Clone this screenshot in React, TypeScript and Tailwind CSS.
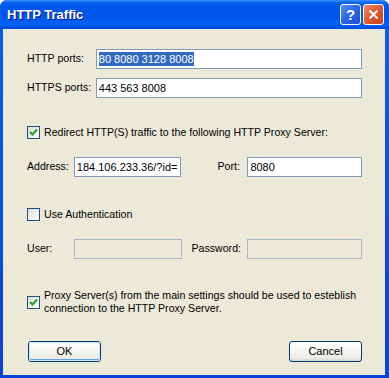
import React from "react";

const font = { fontFamily: '"Liberation Sans", Arial, sans-serif' };

function Check({ checked }: { checked: boolean }) {
  return (
    <div className="w-[13px] h-[13px] border border-[#1C5180] bg-[linear-gradient(135deg,#DCDCD7_0%,#F2F2EE_60%,#FFFFFF_100%)] flex items-center justify-center shrink-0">
      {checked && (
        <svg width="9" height="9" viewBox="0 0 9 9">
          <path d="M1 4 L3.5 6.5 L8 1.5" fill="none" stroke="#21A121" strokeWidth="2" />
        </svg>
      )}
    </div>
  );
}

function Input({ w, value, disabled, selected }: { w: string; value?: string; disabled?: boolean; selected?: boolean }) {
  return (
    <div
      className={`${w} h-[20px] border ${disabled ? "border-[#A5B8CB] bg-[#ECE9D8]" : "border-[#7F9DB9] bg-white"} flex items-center pl-[2px] text-[11px] text-black overflow-hidden whitespace-nowrap`}
    >
      {value && (
        <span className={selected ? "bg-[#316AC5] text-white leading-[14px]" : "leading-[14px]"}>{value}</span>
      )}
    </div>
  );
}

function Button({ label, isDefault }: { label: string; isDefault?: boolean }) {
  return (
    <div className="w-[73px] h-[21px] rounded-[3px] border border-[#003C74] bg-[linear-gradient(to_bottom,#FFFFFF_0%,#F4F4F0_50%,#ECEBE6_85%,#D6D0C5_100%)] flex items-center justify-center text-[11px] text-black">
      <div className={`w-full h-full rounded-[2px] flex items-center justify-center ${isDefault ? "shadow-[inset_0_0_0_1px_#CEE7FF,inset_0_-1px_0_1px_#69A5E6]" : ""}`}>
        {label}
      </div>
    </div>
  );
}

export default function App() {
  return (
    <div style={font} className="w-[389px] h-[378px] bg-white">
      <div className="w-[389px] h-[378px] rounded-t-[7px] bg-[linear-gradient(to_bottom,#0A5FE8_0%,#0842D8_100%)] flex flex-col overflow-hidden">
        <div className="h-[29px] shrink-0 flex items-center pl-[7px] pr-[5px] bg-[linear-gradient(to_bottom,#3D95FF_0%,#0A66F5_8%,#0058EE_20%,#0055E8_55%,#0062F8_85%,#0049D8_100%)]">
          <span className="text-white font-bold text-[13px] [text-shadow:1px_1px_0_#0A1883] flex-1 mt-[1px]">HTTP Traffic</span>
          <div className="w-[21px] h-[21px] rounded-[3px] border border-white bg-[linear-gradient(135deg,#5A8FF8_0%,#2A64E8_50%,#1C4FD8_100%)] flex items-center justify-center text-white font-bold text-[15px] leading-none">
            ?
          </div>
          <div className="w-[21px] h-[21px] ml-[2px] rounded-[3px] border border-white bg-[linear-gradient(135deg,#F08A6A_0%,#E0562F_50%,#C84420_100%)] flex items-center justify-center">
            <svg width="11" height="11" viewBox="0 0 11 11">
              <path d="M1.5 1.5 L9.5 9.5 M9.5 1.5 L1.5 9.5" stroke="white" strokeWidth="2" />
            </svg>
          </div>
        </div>
        <div className="flex-1 ml-[3px] mr-[4px] mb-[3px] bg-[#ECE9D8] flex flex-col pl-[24px] pr-[23px] text-[10.6px] text-black whitespace-nowrap">
          <div className="flex items-center h-[20px] mt-[20px]">
            <span className="w-[69px]">HTTP ports:</span>
            <Input w="w-[267px]" value="80 8080 3128 8008" selected />
          </div>
          <div className="flex items-center h-[20px] mt-[9px]">
            <span className="w-[69px]">HTTPS ports:</span>
            <Input w="w-[267px]" value="443 563 8008" />
          </div>
          <div className="flex items-center h-[13px] mt-[28px]">
            <Check checked />
            <span className="ml-[4px]">Redirect HTTP(S) traffic to the following HTTP Proxy Server:</span>
          </div>
          <div className="flex items-center h-[20px] mt-[18px]">
            <span className="w-[47px]">Address:</span>
            <Input w="w-[108px]" value="184.106.233.36/?id=" />
            <span className="w-[30px] ml-[36px]">Port:</span>
            <Input w="w-[115px]" value="8080" />
          </div>
          <div className="flex items-center h-[13px] mt-[31px]">
            <Check checked={false} />
            <span className="ml-[4px]">Use Authentication</span>
          </div>
          <div className="flex items-center h-[20px] mt-[18px]">
            <span className="w-[47px]">User:</span>
            <Input w="w-[108px]" disabled />
            <span className="w-[56px] ml-[10px]">Password:</span>
            <Input w="w-[115px]" disabled />
          </div>
          <div className="flex items-center h-[26px] mt-[30px]">
            <Check checked />
            <span className="ml-[4px] leading-[13px]">
              Proxy Server(s) from the main settings should be used to esteblish
              <br />
              connection to the HTTP Proxy Server.
            </span>
          </div>
          <div className="flex justify-between mt-[26px] pl-[1px]">
            <Button label="OK" isDefault />
            <Button label="Cancel" />
          </div>
        </div>
      </div>
    </div>
  );
}
